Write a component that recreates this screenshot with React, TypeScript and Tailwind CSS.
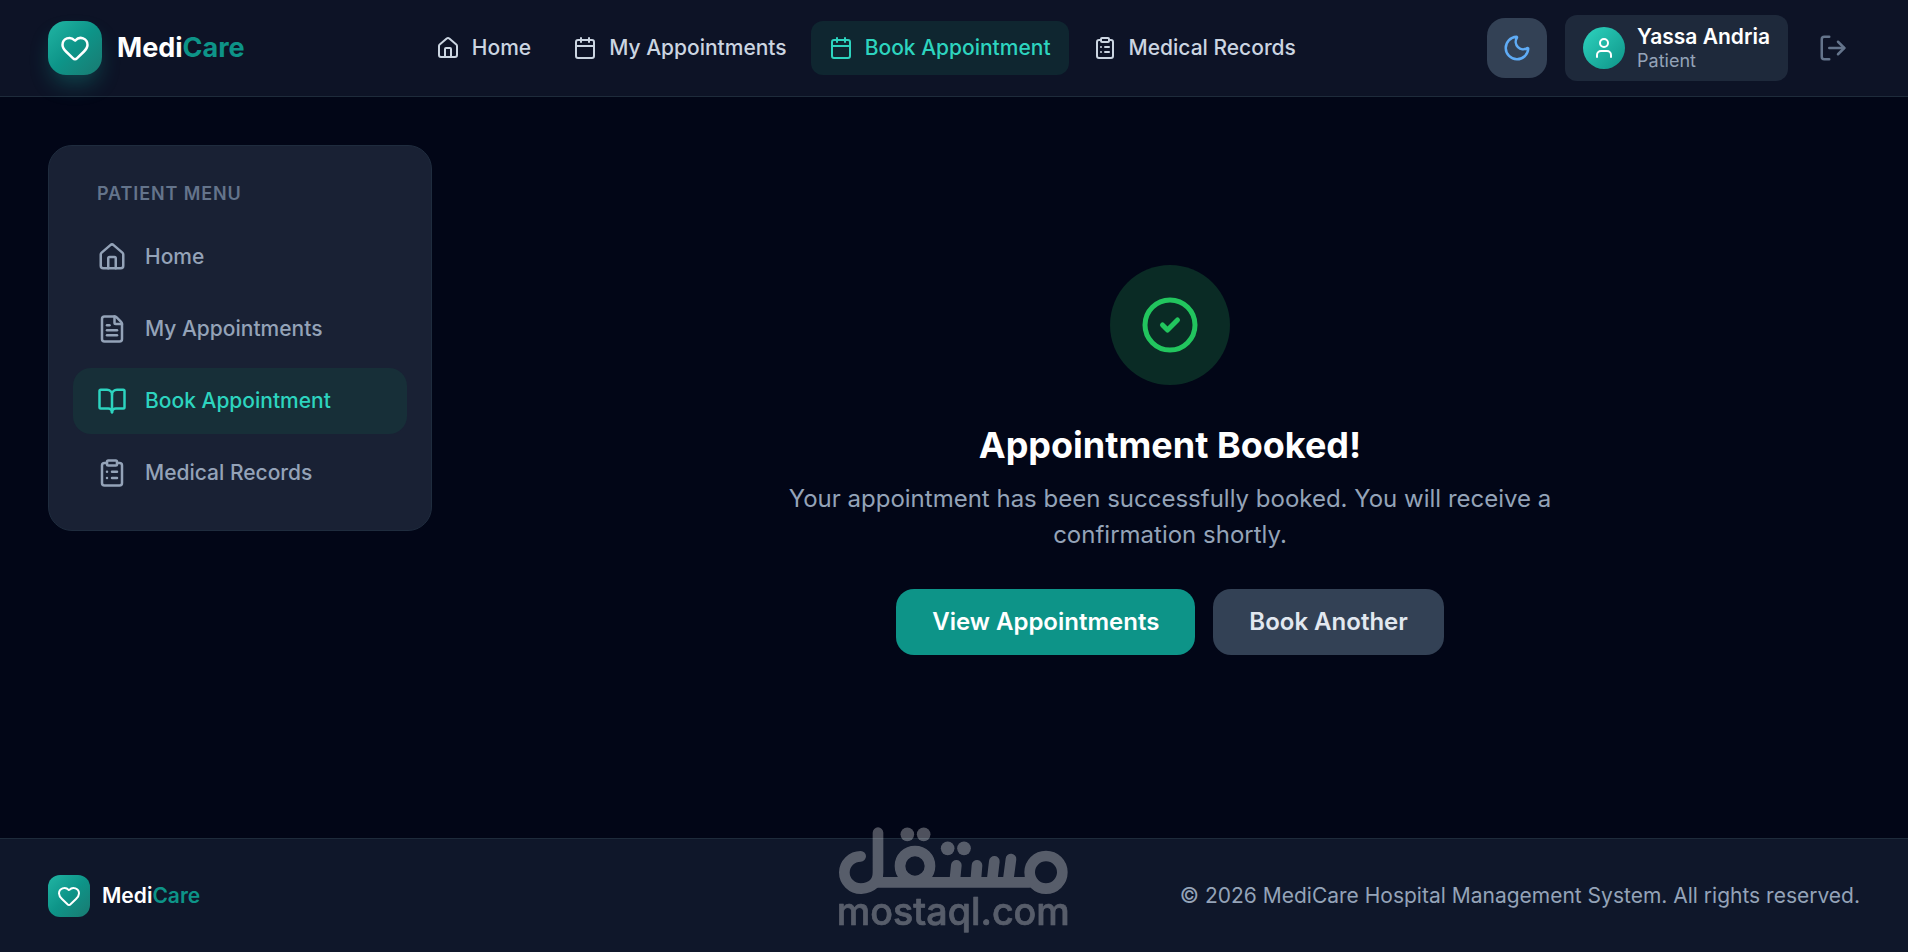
import type { LucideIcon } from "lucide-react";
import {
  BookOpen,
  Calendar,
  CircleCheck,
  ClipboardList,
  FileText,
  Heart,
  House,
  LogOut,
  Moon,
  User,
} from "lucide-react";

type Item = { label: string; icon: LucideIcon; active?: boolean };

const topNav: Item[] = [
  { label: "Home", icon: House },
  { label: "My Appointments", icon: Calendar },
  { label: "Book Appointment", icon: Calendar, active: true },
  { label: "Medical Records", icon: ClipboardList },
];

const sideNav: Item[] = [
  { label: "Home", icon: House },
  { label: "My Appointments", icon: FileText },
  { label: "Book Appointment", icon: BookOpen, active: true },
  { label: "Medical Records", icon: ClipboardList },
];

function Header() {
  return (
    <header className="relative flex h-[97px] items-center justify-between border-b border-[#1e2b3b] bg-[#0d1326] px-12">
      <a href="#" className="flex items-center gap-[15px]">
        <span className="flex size-[54px] items-center justify-center rounded-[18px] bg-linear-to-br from-[#20b5a4] via-[#0d9488] to-[#187a71] text-white shadow-[0_12px_22px_-4px_rgba(20,184,166,0.3)]">
          <Heart size={30} />
        </span>
        <span className="text-[27px] leading-[42px] font-bold text-white">
          Medi<span className="text-[#0d9488]">Care</span>
        </span>
      </a>

      <nav aria-label="Main" className="flex items-center gap-1.5">
        {topNav.map(({ label, icon: Icon, active }) => (
          <a
            key={label}
            href="#"
            aria-current={active ? "page" : undefined}
            className={`flex items-center gap-3 rounded-xl px-[18px] py-3 text-[21px] leading-[30px] font-medium ${
              active ? "bg-[#0f2630] text-[#2dd4bf]" : "text-[#cbd5e1]"
            }`}
          >
            <Icon size={24} />
            {label}
          </a>
        ))}
      </nav>

      <div className="flex items-center gap-[18px]">
        <button
          type="button"
          aria-label="Toggle theme"
          className="flex size-[60px] items-center justify-center rounded-[18px] bg-[#334155] text-[#5fabf5]"
        >
          <Moon size={30} />
        </button>
        <div className="flex items-center gap-3 rounded-xl bg-[#1e293b] px-[18px] py-[9px]">
          <span className="flex size-[42px] items-center justify-center rounded-full bg-linear-to-br from-[#2dd4bf] to-[#0d9488] text-white">
            <User size={24} />
          </span>
          <div>
            <p className="text-[21px] leading-[26px] font-semibold text-white">Yassa Andria</p>
            <p className="text-[18px] leading-[22px] text-[#94a3b8]">Patient</p>
          </div>
        </div>
        <button type="button" aria-label="Log out" className="p-3 text-[#64748b]">
          <LogOut size={30} />
        </button>
      </div>
    </header>
  );
}

function Sidebar() {
  return (
    <aside className="w-96 shrink-0 rounded-3xl border border-[#1f2c3e] bg-[#192134] p-6">
      <h2 className="mt-3 mb-[18px] px-6 text-[18px] leading-6 font-semibold tracking-wider text-[#64748b] uppercase">
        Patient Menu
      </h2>
      <nav aria-label="Patient menu" className="flex flex-col gap-1.5">
        {sideNav.map(({ label, icon: Icon, active }) => (
          <a
            key={label}
            href="#"
            aria-current={active ? "page" : undefined}
            className={`flex items-center gap-[18px] rounded-[18px] px-6 py-[18px] text-[21px] leading-[30px] font-medium ${
              active ? "bg-[#172f38] text-[#2dd4bf]" : "text-[#94a3b8]"
            }`}
          >
            <Icon size={30} />
            {label}
          </a>
        ))}
      </nav>
    </aside>
  );
}

function Confirmation() {
  return (
    <main className="flex flex-1 flex-col items-center pt-[120px] text-center">
      <div className="flex size-[120px] items-center justify-center rounded-full bg-[#0a2b25] text-[#22c55e]">
        <CircleCheck size={60} />
      </div>
      <h1 className="mt-9 text-[36px] leading-[48px] font-bold text-white">Appointment Booked!</h1>
      <p className="mt-3 max-w-3xl text-[24px] leading-9 text-[#94a3b8]">
        Your appointment has been successfully booked. You will receive a confirmation shortly.
      </p>
      <div className="mt-9 flex gap-[18px]">
        <button
          type="button"
          className="rounded-[18px] bg-[#0d9488] px-9 py-[15px] text-[24px] leading-9 font-semibold text-white"
        >
          View Appointments
        </button>
        <button
          type="button"
          className="rounded-[18px] bg-[#334155] px-9 py-[15px] text-[24px] leading-9 font-semibold text-[#e2e8f0]"
        >
          Book Another
        </button>
      </div>
    </main>
  );
}

function Watermark() {
  return (
    <div className="pointer-events-none fixed inset-x-0 bottom-0 flex justify-center">
      <svg width="268" height="142" viewBox="0 0 804 426" role="img" aria-label="mostaql.com">
        <g opacity="0.3" fill="none" stroke="#fff" strokeWidth="32" strokeLinecap="round">
          <path d="M122 139A49 49 0 0 0 73 187A50 49 0 0 0 123 236Q174 232 174 187V68" />
          <path d="M172 217H628" />
          <circle cx="285" cy="168" r="45" />
          <path d="M409 166L404 215M471 166L467 215M523 154L516 215M573 147L564 215" />
          <circle cx="678" cy="187" r="49" />
          <g fill="#fff" stroke="none">
            <circle cx="262" cy="73" r="20.500" />
            <circle cx="311" cy="73" r="20.500" />
            <circle cx="383" cy="115" r="20.500" />
            <circle cx="432" cy="115" r="20.500" />
          </g>
          <text
            x="400"
            y="344"
            textAnchor="middle"
            fill="#fff"
            strokeWidth="2"
            strokeLinejoin="round"
            fontSize="113"
            fontWeight="500"
            fontFamily="Inter, sans-serif"
          >
            mostaql.com
          </text>
        </g>
      </svg>
    </div>
  );
}

function Footer() {
  return (
    <footer className="flex items-center justify-between border-t border-[#1e2b3b] bg-[#0f172a] px-12 pt-9 pb-[35px]">
      <a href="#" className="flex items-center gap-3">
        <span className="flex size-[42px] items-center justify-center rounded-xl bg-linear-to-br from-[#20b5a4] via-[#0d9488] to-[#187a71] text-white">
          <Heart size={24} />
        </span>
        <span className="text-[21px] leading-[30px] font-semibold text-white">
          Medi<span className="text-[#0d9488]">Care</span>
        </span>
      </a>
      <p className="text-[21px] leading-[30px] text-[#94a3b8]">
        © 2026 MediCare Hospital Management System. All rights reserved.
      </p>
    </footer>
  );
}

export default function App() {
  return (
    <div className="flex min-h-screen flex-col bg-[#020617] font-['Inter',sans-serif]">
      <Header />
      <div className="flex flex-1 items-start gap-12 p-12">
        <Sidebar />
        <Confirmation />
      </div>
      <Footer />
      <Watermark />
    </div>
  );
}
